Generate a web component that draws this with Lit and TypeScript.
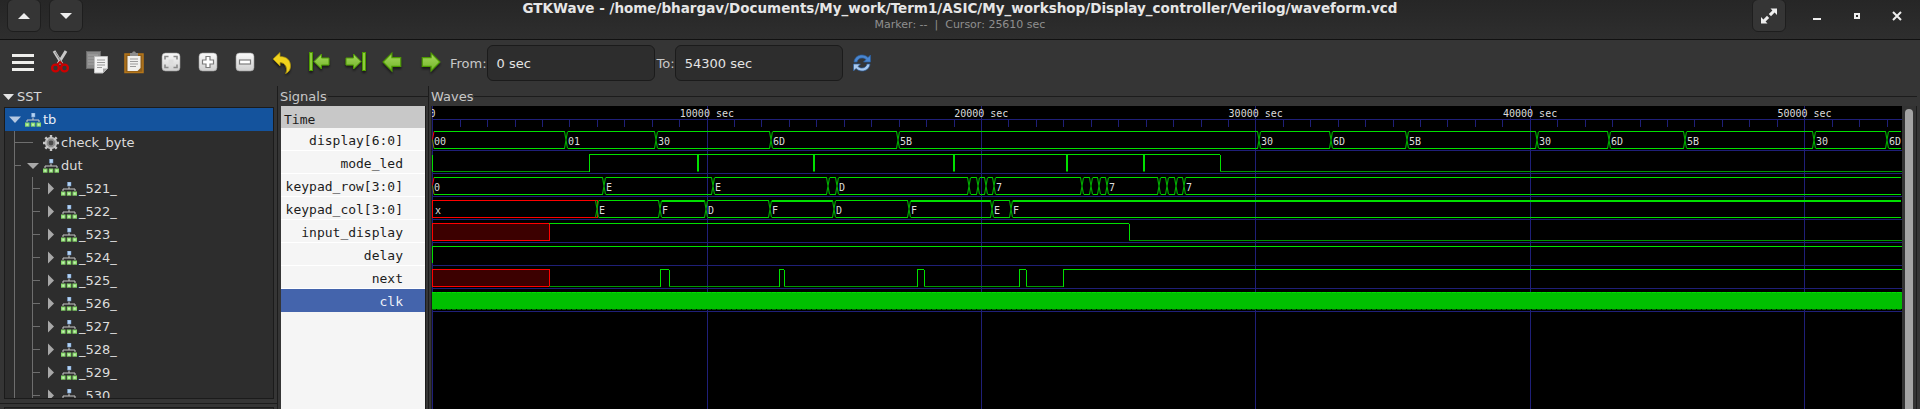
import { LitElement, html, css, svg } from 'lit';
import { customElement } from 'lit/decorators.js';

const WAVE_LEFT = 432;
const WAVE_RIGHT = 1902;
const BLUE = '#1f1f78';
const HIGH = '#00e000';
const LOW = '#009800';
const EDGE = '#00a800';
const RED = '#ff0000';
const px = (v: number) => Math.round(v) + 0.5;
const rowHigh = (r: number) => 131.5 + 23 * r;
const rowLow = (r: number) => 148.5 + 23 * r;

type Seg = [number, string];

const SIGNALS = ['display[6:0]', 'mode_led', 'keypad_row[3:0]', 'keypad_col[3:0]', 'input_display', 'delay', 'next', 'clk'];

const DISPLAY: Seg[] = [[432, '00'], [566, '01'], [656, '30'], [771, '6D'], [898, '5B'], [1259, '30'], [1331, '6D'], [1407, '5B'], [1537, '30'], [1609, '6D'], [1685, '5B'], [1814, '30'], [1887, '6D']];
const KEY_ROW: Seg[] = [[432, '0'], [604, 'E'], [713, 'E'], [828, ''], [837, 'D'], [969, ''], [978, ''], [986, ''], [994, '7'], [1082, ''], [1091, ''], [1099, ''], [1107, '7'], [1159, ''], [1167, ''], [1176, ''], [1184, '7']];
const KEY_COL: Seg[] = [[597, 'E'], [660, 'F'], [706, 'D'], [770, 'F'], [834, 'D'], [909, 'F'], [992, 'E'], [1011, 'F']];

const line = (x1: number, y1: number, x2: number, y2: number, c: string) =>
  svg`<line x1=${x1} y1=${y1} x2=${x2} y2=${y2} stroke=${c} shape-rendering="crispEdges"></line>`;

function busRow(r: number, segs: Seg[], end = WAVE_RIGHT) {
  const hi = rowHigh(r);
  const lo = rowLow(r);
  return segs.map(([x, label], i) => {
    const next = i + 1 < segs.length ? segs[i + 1][0] : end;
    const thick = label === 'F';
    return svg`
      ${line(x + 2, hi, next - 1, hi, HIGH)}
      ${thick ? line(x + 2, hi + 1, next - 1, hi + 1, HIGH) : ''}
      ${line(x + 2, lo, next - 1, lo, HIGH)}
      ${x > WAVE_LEFT ? svg`<path d="M${x - 1.5} ${hi}L${x + 1.5} ${lo}M${x - 1.5} ${lo}L${x + 1.5} ${hi}" stroke=${EDGE} stroke-width="1.2" fill="none"></path>` : ''}
      ${label ? svg`<text class="val" x=${x + 2} y=${hi + 13.5}>${label}</text>` : ''}
    `;
  });
}

function startCurve(r: number) {
  const hi = rowHigh(r);
  return svg`
    <path d="M434 ${hi}L432.5 ${hi + 8}" stroke=${RED} fill="none"></path>
    <path d="M432.5 ${hi + 8}L434 ${hi + 17}" stroke="#808000" fill="none"></path>`;
}

function unknownBox(r: number, x2: number, filled: boolean) {
  const hi = rowHigh(r);
  return svg`<rect x="432.5" y=${hi} width=${x2 - 432} height="17" fill=${filled ? '#3c0000' : '#000'} stroke=${RED} shape-rendering="crispEdges"></rect>`;
}

function glitch(r: number, x: number) {
  return svg`<rect x=${x} y=${rowHigh(r)} width="2" height="17" fill=${HIGH}></rect>`;
}

function waves() {
  const ticks = [];
  for (let i = 0; WAVE_LEFT + 0.5 + i * 27.44 < WAVE_RIGHT; i++) {
    const x = px(WAVE_LEFT + 0.2 + i * 27.44);
    ticks.push(i % 10 === 0 ? line(x, 106, x, 409, BLUE) : line(x, 120, x, 127, BLUE));
  }
  const labels = [0, 1, 2, 3, 4, 5].map((k) => svg`
    <text class="val" text-anchor="middle" x=${WAVE_LEFT + 0.5 + k * 274.4} y="117">${k === 0 ? '0' : `${k}0000 sec`}</text>`);
  const seps = [0, 1, 2, 3, 4, 5, 6, 7].map((r) => line(WAVE_LEFT, 150.5 + 23 * r, WAVE_RIGHT, 150.5 + 23 * r, BLUE));

  const modeHigh = 154.5;
  const modeLow = 171.5;
  const nextHigh = rowHigh(6);
  const nextLow = rowLow(6);
  const pulses: [number, number][] = [[660, 669], [779, 784], [917, 924], [1019, 1026]];
  let nextX = 549;
  const nextLines = pulses.map(([a, b]) => {
    const out = svg`
      ${line(nextX, nextLow, a, nextLow, LOW)}
      ${line(a + 0.5, nextHigh, a + 0.5, nextLow, HIGH)}
      ${line(a, nextHigh, b, nextHigh, HIGH)}
      ${line(b + 0.5, nextHigh, b + 0.5, nextLow, HIGH)}`;
    nextX = b;
    return out;
  });

  return html`<svg class="wave-canvas" width="1470" height="303" viewBox="432 106 1470 303">
    <rect x="432" y="106" width="1470" height="303" fill="#000"></rect>
    ${line(WAVE_LEFT, 119.5, WAVE_RIGHT, 119.5, BLUE)}
    ${ticks}
    ${seps}
    ${labels}
    ${startCurve(0)}
    ${busRow(0, DISPLAY)}

    ${line(432.5, modeHigh, 432.5, modeLow, HIGH)}
    ${line(432, modeLow, 589, modeLow, LOW)}
    ${line(589.5, modeHigh, 589.5, modeLow, HIGH)}
    ${line(589, modeHigh, 1220, modeHigh, HIGH)}
    ${[697, 813, 953, 1066, 1143].map((x) => glitch(1, x))}
    ${line(1220.5, modeHigh, 1220.5, modeLow, HIGH)}
    ${line(1220, modeLow, WAVE_RIGHT, modeLow, LOW)}

    ${startCurve(2)}
    ${busRow(2, KEY_ROW)}

    ${unknownBox(3, 597, false)}
    <text class="val" x="435" y=${rowHigh(3) + 13.5}>x</text>
    ${busRow(3, KEY_COL)}

    ${unknownBox(4, 549, true)}
    ${line(549, rowHigh(4), 1129, rowHigh(4), HIGH)}
    ${line(1129.5, rowHigh(4), 1129.5, rowLow(4), HIGH)}
    ${line(1129, rowLow(4), WAVE_RIGHT, rowLow(4), LOW)}

    ${line(432.5, rowHigh(5), 432.5, rowLow(5) - 1, HIGH)}
    ${line(432, rowHigh(5), WAVE_RIGHT, rowHigh(5), HIGH)}

    ${unknownBox(6, 549, true)}
    ${nextLines}
    ${line(nextX, nextLow, 1063, nextLow, LOW)}
    ${line(1063.5, nextHigh, 1063.5, nextLow, HIGH)}
    ${line(1063, nextHigh, WAVE_RIGHT, nextHigh, HIGH)}

    <rect x="432" y="292" width="1470" height="17" fill="#00c000"></rect>
    <line x1="432" y1="292.5" x2=${WAVE_RIGHT} y2="292.5" stroke="#00e000" stroke-dasharray="4 1"></line>
    <line x1="432" y1="309.5" x2=${WAVE_RIGHT} y2="309.5" stroke="#006000" stroke-dasharray="4 1"></line>
  </svg>`;
}

const moduleIcon = () => svg`<svg class="node-icon" width="16" height="14" viewBox="0 0 16 14">
  <rect x="6.5" y="0" width="3.5" height="4" fill="#b3d3f5" stroke="#6f94c4" stroke-width=".5"></rect>
  <path d="M8 4.5V7M2 9V7H14V9" stroke="#c9c9c9" fill="none"></path>
  <rect x="0" y="9.5" width="4.5" height="4.2" fill="#86d86a"></rect>
  <rect x="5.8" y="9.5" width="4.5" height="4.2" fill="#86d86a"></rect>
  <rect x="11.5" y="9.5" width="4.5" height="4.2" fill="#86d86a"></rect>
  <rect x="1.3" y="10.7" width="2" height="2" fill="#c5eeb5"></rect>
  <rect x="7" y="10.7" width="2" height="2" fill="#c5eeb5"></rect>
  <rect x="12.7" y="10.7" width="2" height="2" fill="#c5eeb5"></rect>
</svg>`;

const gearIcon = () => svg`<svg class="node-icon" width="16" height="16" viewBox="0 0 16 16">
  <circle cx="8" cy="8" r="6.2" fill="#b4b4b4"></circle>
  <path d="M8 0V16M0 8H16M2.3 2.3L13.7 13.7M13.7 2.3L2.3 13.7" stroke="#c6c6c6" stroke-width="2.4"></path>
  <circle cx="8" cy="8" r="4.4" fill="#8b8b8b"></circle>
  <circle cx="8" cy="8" r="2.4" fill="#4a4a4a"></circle>
</svg>`;

// gutter holds the tree guides and the expander, drawn per row
function gutter(kind: string) {
  const g = '#6e6e6e';
  const a = '#a8a8a8';
  if (kind === 'tb') {
    return svg`<svg class="gutter" width="20" height="23"><path d="M4 8.5H16L10 15Z" fill="#b4c8e2"></path></svg>`;
  }
  if (kind === 'check') {
    return svg`<svg class="gutter" width="38" height="23">
      <path d="M9.5 0V23M10 11.5H28" stroke=${g} fill="none"></path></svg>`;
  }
  if (kind === 'dut') {
    return svg`<svg class="gutter" width="38" height="23">
      <path d="M9.5 0V23M10 11.5H16" stroke=${g} fill="none"></path>
      <path d="M22 9H34L28 15Z" fill=${a}></path></svg>`;
  }
  return svg`<svg class="gutter" width="56" height="23">
    <path d="M9.5 0V23M27.5 0V23M28 11.5H35" stroke=${g} fill="none"></path>
    <path d="M43 5.5L49 11.5L43 17.5Z" fill=${a}></path></svg>`;
}

const arrowShadow = svg`<filter id="sh" x="-30%" y="-30%" width="160%" height="180%"><feDropShadow dx="0" dy="2" stdDeviation="1.2" flood-color="#000" flood-opacity=".55"></feDropShadow></filter>`;
const greenFill = svg`<linearGradient id="gr" x1="0" y1="0" x2="0" y2="1"><stop offset="0" stop-color="#a6d85c"></stop><stop offset="1" stop-color="#74b52c"></stop></linearGradient>`;

const ICON_ARROW_LEFT = 'M1 10L9 2V6H17V14H9V18Z';
const ICON_ARROW_RIGHT = 'M19 10L11 2V6H3V14H11V18Z';

const toolIcons = [
  svg`<svg width="22" height="22" viewBox="0 0 22 22">
    <rect y="3" width="22" height="3" fill="#eeeeec"></rect>
    <rect y="10" width="22" height="3" fill="#eeeeec"></rect>
    <rect y="17" width="22" height="3" fill="#eeeeec"></rect></svg>`,
  svg`<svg width="22" height="22" viewBox="0 0 22 22">
    <path d="M5 0L13 13M17 0L9 13" stroke="#c9c9c9" stroke-width="3" fill="none"></path>
    <path d="M6 1L13 12" stroke="#8a8a8a" fill="none"></path>
    <circle cx="6.5" cy="17" r="3.4" fill="none" stroke="#cc0000" stroke-width="2.4"></circle>
    <circle cx="15.5" cy="17" r="3.4" fill="none" stroke="#cc0000" stroke-width="2.4"></circle>
    <path d="M8 14L11 11L14 14" stroke="#c00000" stroke-width="2" fill="none"></path></svg>`,
  svg`<svg width="22" height="22" viewBox="0 0 22 22">
    <rect x="0.5" y="0.5" width="14" height="17" fill="#8a8a8a" stroke="#6b6b6b"></rect>
    <path d="M2 4H12M2 7H8M2 10H8M2 13H8" stroke="#a5a5a5"></path>
    <path d="M8.5 5.5H21.5V17.5L17 22H8.5Z" fill="#f2f2f2" stroke="#bdbdbd"></path>
    <path d="M11 9H19M11 11.5H19M11 14H19M11 16.5H16" stroke="#9a9a9a"></path>
    <path d="M17 22V17.5H21.5Z" fill="#a8a8a8"></path></svg>`,
  svg`<svg width="22" height="22" viewBox="0 0 22 22">
    <rect x="2" y="3" width="18" height="18.5" fill="#8f5f1b" stroke="#b5761a" stroke-width="1.5"></rect>
    <path d="M4.5 5H17.5V17L14.5 20H4.5Z" fill="#f0f0ee"></path>
    <path d="M7 4V2H9L10 0.5H12L13 2H15V5H7Z" fill="#8d8d8d"></path>
    <path d="M7 8H15M7 10.5H15M7 13H15M7 15.5H13" stroke="#9a9a9a"></path></svg>`,
  svg`<svg width="22" height="22" viewBox="0 0 22 22">
    <rect x="2" y="2" width="18" height="18" rx="3.5" fill="url(#wh)" stroke="#9b9b9b" stroke-width=".6"></rect>
    <path d="M5 8.5V5.5H8.5M13.5 5.5H17V8.5M17 13.5V16.5H13.5M8.5 16.5H5V13.5" fill="none" stroke="#8a8a8a" stroke-width="1.6"></path>
    <rect x="8.5" y="8.5" width="5" height="5" fill="#dddddd"></rect></svg>`,
  svg`<svg width="22" height="22" viewBox="0 0 22 22">
    <rect x="2" y="2" width="18" height="18" rx="3.5" fill="url(#wh)" stroke="#9b9b9b" stroke-width=".6"></rect>
    <path d="M9 5.5H13V9H16.5V13H13V16.5H9V13H5.5V9H9Z" fill="#ffffff" stroke="#7d7d7d" stroke-width="1.2"></path></svg>`,
  svg`<svg width="22" height="22" viewBox="0 0 22 22">
    <rect x="2" y="2" width="18" height="18" rx="3.5" fill="url(#wh)" stroke="#9b9b9b" stroke-width=".6"></rect>
    <rect x="5.5" y="9" width="11" height="4" fill="#ffffff" stroke="#7d7d7d" stroke-width="1.2"></rect></svg>`,
  svg`<svg width="22" height="24" viewBox="0 0 22 24">
    <path d="M2 8L9 1.5V5.5C16 5.5 19.5 9.5 19.5 15C19.5 18.5 17.5 21.5 14.5 22.5C16 20.5 16 18 15 15.5C14 13 11.5 11.5 9 11.5V15Z" fill="#f0d21f" stroke="#a88f0a" stroke-width=".7" filter="url(#sh)"></path></svg>`,
  svg`<svg width="22" height="22" viewBox="0 0 22 22">
    <g filter="url(#sh)"><rect x="1.5" y="1.5" width="3" height="18" fill="#8ccb3c" stroke="#4e9a06"></rect>
    <path d="M6 10.5L13.5 3V7H21V14H13.5V18Z" fill="url(#gr)" stroke="#4e9a06"></path></g></svg>`,
  svg`<svg width="22" height="22" viewBox="0 0 22 22">
    <g filter="url(#sh)"><rect x="17.5" y="1.5" width="3" height="18" fill="#8ccb3c" stroke="#4e9a06"></rect>
    <path d="M16 10.5L8.5 3V7H1V14H8.5V18Z" fill="url(#gr)" stroke="#4e9a06"></path></g></svg>`,
  svg`<svg width="22" height="22" viewBox="0 0 20 20">
    <path d=${ICON_ARROW_LEFT} fill="url(#gr)" stroke="#4e9a06" filter="url(#sh)"></path></svg>`,
  svg`<svg width="22" height="22" viewBox="0 0 20 20">
    <path d=${ICON_ARROW_RIGHT} fill="url(#gr)" stroke="#4e9a06" filter="url(#sh)"></path></svg>`,
];

@customElement('app-root')
export class AppRoot extends LitElement {
  static styles = css`
    :host {
      display: block;
      width: 1920px;
      height: 409px;
      overflow: hidden;
      background: #353535;
      color: #e4e4e4;
      font-family: 'DejaVu Sans', sans-serif;
      font-size: 13px;
    }
    .titlebar {
      display: grid;
      grid-template-columns: 1fr auto 1fr;
      height: 39px;
      background: linear-gradient(#262626, #2e2e2e);
      border-bottom: 1px solid #111;
    }
    .title-left { display: flex; gap: 8px; padding-left: 7px; }
    .title-right { display: flex; justify-content: flex-end; align-items: flex-start; }
    .hbtn {
      width: 34px;
      height: 33px;
      box-sizing: border-box;
      margin-top: -1px;
      display: flex;
      align-items: center;
      justify-content: center;
      background: #353535;
      border: 1px solid #1e1e1e;
      border-radius: 6px;
    }
    .win-btn { width: 40px; height: 32px; display: flex; align-items: center; justify-content: center; }
    .win-btn.first { margin-left: 11px; }
    .win-btn.last { margin-right: 3px; }
    .title-text { text-align: center; padding-top: 1px; }
    .title-main { font-weight: bold; font-size: 13.5px; line-height: 15px; color: #e6e6e6; }
    .title-sub { font-size: 11px; line-height: 14px; margin-top: 2px; color: #8f8f8f; white-space: pre; }

    .toolbar {
      display: flex;
      align-items: center;
      height: 46px;
      padding-left: 12px;
      box-sizing: border-box;
    }
    .tools { display: flex; gap: 15px; }
    .tools svg { display: block; overflow: visible; }
    .defs { position: absolute; width: 0; height: 0; }
    .tlabel { color: #c8c8c8; }
    .from { margin-left: 9px; }
    .to { margin-left: 2px; }
    .field {
      width: 168px;
      height: 36px;
      box-sizing: border-box;
      padding-left: 9px;
      display: flex;
      align-items: center;
      background: #2d2d2d;
      border: 1px solid #1b1b1b;
      border-radius: 6px;
      color: #e4e4e4;
    }
    .refresh { display: block; margin-left: 9px; }

    .main { display: flex; height: 323px; }
    .sep { width: 1px; background: #1c1c1c; flex: none; }

    .left { width: 277px; flex: none; display: flex; flex-direction: column; }
    .sst-head { height: 21px; display: flex; align-items: center; gap: 3px; padding-left: 3px; color: #d8d8d8; flex: none; }
    .tree {
      margin: 0 3px 0 4px;
      height: 292px;
      flex: none;
      box-sizing: border-box;
      border: 1px solid #1b1b1b;
      background: #2d2d2d;
      overflow: hidden;
    }
    .node { height: 23px; display: flex; align-items: center; color: #dcdcdc; white-space: nowrap; }
    .node.selected { background: #14539d; color: #e8eef6; }
    .gutter { display: block; flex: none; }
    .node-icon { display: block; flex: none; margin-right: 2px; }
    .lower-line { height: 1px; background: #1c1c1c; margin-top: 4px; flex: none; }
    .lower { margin: 3px 3px 0 4px; flex: 1; background: #2d2d2d; border: 1px solid #1b1b1b; border-bottom: 0; }

    .sig-pane { width: 150px; flex: none; display: flex; flex-direction: column; padding-left: 3px; box-sizing: border-box; }
    .frame-head { height: 20px; flex: none; display: flex; color: #c8c8c8; line-height: 22px; }
    .frame-head span { margin-left: -1px; }
    .wave-pane .frame-head span { margin-left: 0; }
    .frame-head i { flex: 1; height: 10px; border-bottom: 1px solid #1c1c1c; margin-left: 1px; }
    .sig-body { flex: 1; display: flex; border-right: 1px solid #1c1c1c; margin-right: 2px; }
    .sig-list {
      flex: 1;
      background: #f5f5f5;
      font-family: 'DejaVu Sans Mono', monospace;
      font-size: 13px;
      color: #1c1c1c;
    }
    .sig-time { height: 22px; background: #c8c8c8; line-height: 28px; padding-left: 3px; overflow: hidden; }
    .sig-row {
      height: 23px;
      box-sizing: border-box;
      line-height: 25px;
      text-align: right;
      padding-right: 22px;
      white-space: pre;
      border-bottom: 1px solid #fff;
      overflow: hidden;
    }
    .sig-row.active { background: #4464ac; color: #eef1f8; border-bottom-color: #4464ac; }

    .wave-pane { flex: 1; display: flex; flex-direction: column; padding-left: 2px; padding-right: 3px; min-width: 0; }
    .wave-body { flex: 1; display: flex; border-left: 1px solid #1c1c1c; border-right: 1px solid #1c1c1c; }
    .wave-canvas { display: block; flex: none; font-family: 'DejaVu Sans Mono', monospace; }
    .wave-canvas .val { font-size: 10px; fill: #dcdcdc; }
    .vscroll { flex: 1; background: #333; padding: 3px 3px 0; overflow: hidden; }
    .vscroll div { height: 400px; border-radius: 4px; background: #a4a4a4; }
  `;

  render() {
    const tree = ['_521_', '_522_', '_523_', '_524_', '_525_', '_526_', '_527_', '_528_', '_529_', '_530_'];
    return html`
      <div class="titlebar">
        <div class="title-left">
          <div class="hbtn"><svg width="12" height="8"><path d="M0 7H12L6 1Z" fill="#eee"></path></svg></div>
          <div class="hbtn"><svg width="12" height="8"><path d="M0 1H12L6 7Z" fill="#eee"></path></svg></div>
        </div>
        <div class="title-text">
          <div class="title-main">GTKWave - /home/bhargav/Documents/My_work/Term1/ASIC/My_workshop/Display_controller/Verilog/waveform.vcd</div>
          <div class="title-sub">Marker: --  |  Cursor: 25610 sec</div>
        </div>
        <div class="title-right">
          <div class="hbtn">
            <svg width="16" height="16" viewBox="0 0 16 16"><path d="M9.5 0.5H16V7L13.6 4.6L10 8.2L7.8 6L11.4 2.4ZM6.5 15.5H0V9L2.4 11.4L6 7.8L8.2 10L4.6 13.6Z" fill="#eee"></path></svg>
          </div>
          <div class="win-btn first"><svg width="8" height="8" viewBox="0 0 8 8"><rect y="6" width="8" height="2" fill="#eee"></rect></svg></div>
          <div class="win-btn"><svg width="8" height="8" viewBox="0 0 8 8"><path fill-rule="evenodd" d="M1 1H7V7H1ZM3 3H5V5H3Z" fill="#eee"></path></svg></div>
          <div class="win-btn last"><svg width="10" height="10" viewBox="0 0 10 10"><path d="M1 1L9 9M9 1L1 9" stroke="#eee" stroke-width="2"></path></svg></div>
        </div>
      </div>

      <div class="toolbar">
        <svg class="defs">
          <defs>
            ${arrowShadow}
            ${greenFill}
            <linearGradient id="wh" x1="0" y1="0" x2="0" y2="1"><stop offset="0" stop-color="#fafafa"></stop><stop offset="1" stop-color="#cfcfcf"></stop></linearGradient>
          </defs>
        </svg>
        <div class="tools">${toolIcons}</div>
        <span class="tlabel from">From:</span>
        <div class="field">0 sec</div>
        <span class="tlabel to">To:</span>
        <div class="field">54300 sec</div>
        <svg class="refresh" width="20" height="20" viewBox="0 0 20 20">
          <path d="M2 9C2.5 4.5 6 2 10 2C12.5 2 14.5 3 16 4.5L18.5 2V9H11.5L14 6.5C13 5.6 11.6 5 10 5C7.5 5 5.5 6.6 5 9Z" fill="#4a86cf" stroke="#2a5d9e" stroke-width=".7"></path>
          <path d="M18 11C17.5 15.5 14 18 10 18C7.5 18 5.5 17 4 15.5L1.5 18V11H8.5L6 13.5C7 14.4 8.4 15 10 15C12.5 15 14.5 13.4 15 11Z" fill="#a9c8ec" stroke="#2a5d9e" stroke-width=".7"></path>
        </svg>
      </div>

      <div class="main">
        <div class="left">
          <div class="sst-head"><svg width="11" height="6"><path d="M0 0H11L5.5 6Z" fill="#e4e4e4"></path></svg><span>SST</span></div>
          <div class="tree">
            <div class="node selected">${gutter('tb')}${moduleIcon()}<span>tb</span></div>
            <div class="node">${gutter('check')}${gearIcon()}<span>check_byte</span></div>
            <div class="node">${gutter('dut')}${moduleIcon()}<span>dut</span></div>
            ${tree.map((t) => html`<div class="node">${gutter('child')}${moduleIcon()}<span>${t}</span></div>`)}
          </div>
          <div class="lower-line"></div>
          <div class="lower"></div>
        </div>
        <div class="sep"></div>
        <div class="sig-pane">
          <div class="frame-head"><span>Signals</span><i></i></div>
          <div class="sig-body">
            <div class="sig-list">
              <div class="sig-time">Time</div>
              ${SIGNALS.map((s) => html`<div class="sig-row ${s === 'clk' ? 'active' : ''}">${s}</div>`)}
            </div>
          </div>
        </div>
        <div class="sep"></div>
        <div class="wave-pane">
          <div class="frame-head"><span>Waves</span><i></i></div>
          <div class="wave-body">
            ${waves()}
            <div class="vscroll"><div></div></div>
          </div>
        </div>
      </div>
    `;
  }
}
